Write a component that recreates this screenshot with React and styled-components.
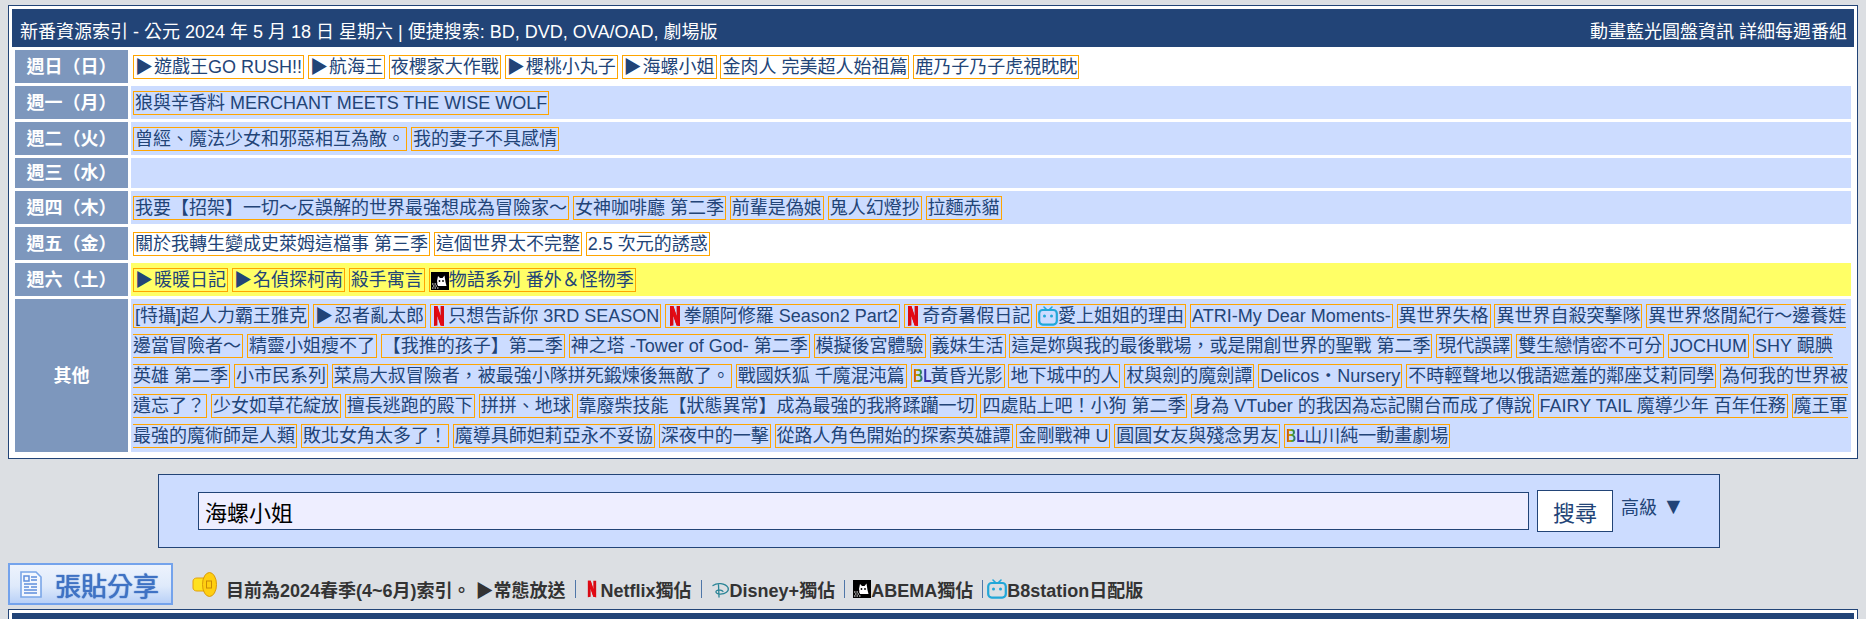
import React from "react";
import styled, { createGlobalStyle } from "styled-components";

const navy = "#224477";
const Global = createGlobalStyle`
  html, body { margin: 0; padding: 0; background: #dcdfe3; }
  body { font-family: "Liberation Sans", "Noto Sans CJK TC", sans-serif; color: ${navy}; }
`;
const Page = styled.div`
  height: 619px; overflow: hidden; padding: 5px 8px 0; box-sizing: border-box;
`;
const Panel = styled.section`
  border: 1px solid ${navy}; background: #fff; padding: 3px 3px 0; margin-top: ${p => p.$top ?? 0}px;
`;
const Panel1 = styled(Panel)`height: 454px; box-sizing: border-box;`;
const Header = styled.header`
  height: 38px; box-sizing: border-box; padding: 9px 7px 0 8px; background: ${navy}; color: #fff;
  display: flex; justify-content: space-between; font-size: 18px; line-height: 28px;
`;
const Rows = styled.div`
  display: flex; flex-direction: column; gap: 3px; padding: 3px 3px 0;
`;
const Row = styled.div`display: flex; gap: 3px;`;
const Label = styled.div`
  flex: 0 0 113px; background: #7d97bd; color: #fff; font-weight: 700; font-size: 18px;
  line-height: 30px; display: flex; align-items: center; justify-content: center;
`;
const Cell = styled.div`
  flex: 1; min-width: 0; background: ${p => p.$bg}; padding: 2px 2px 1px; font-size: 14px; line-height: 0;
  &:empty { padding: 0; }
`;
const Item = styled.a`
  font-size: 18px; color: ${navy}; border: 1px solid #ffa500; padding: 1px; text-decoration: none; line-height: 30px;
`;
const Play = styled.span`margin-right: 1px;`;
const IconWrap = styled.svg`
  width: ${p => p.$w}px; height: ${p => p.$h}px; vertical-align: ${p => p.$va ?? -3}px; margin: ${p => p.$m ?? "0"}; flex: none;
`;
const BLMark = styled.span`
  display: inline-block; width: 25px; margin-right: -7px; font-weight: 700; font-size: 19px; line-height: 1; white-space: nowrap;
  transform: scaleX(.74); transform-origin: left center;
  background: linear-gradient(90deg, #c8301f 0%, #d09a00 20%, #2f9838 38%, #2f48b8 54%, #3f2aa0 75%);
  -webkit-background-clip: text; background-clip: text; color: transparent;
`;
const NIcon = ({ w = 12, h = 20, va = -4, m = "0 3px 0 1.5px" }) => (
  <IconWrap $w={w} $h={h} $va={va} $m={m} viewBox="0 0 12 20">
    <path d="M1 0h3.4l3.2 10V0H11v20l-3.4-.6L4.4 10v9.4L1 20z" fill="#d80a14" />
    <path d="M1 0h3.4L11 20l-3.4-.6z" fill="#e50914" />
  </IconWrap>
);
const B8Icon = ({ w = 20, h = 20, va = -4 }) => (
  <IconWrap $w={w} $h={h} $va={va} viewBox="0 0 20 20">
    <path d="M6 1l3 3M14 1l-3 3" stroke="#22a7d8" strokeWidth="1.6" strokeLinecap="round" />
    <rect x="1.2" y="4" width="17.6" height="14.6" rx="3.5" fill="none" stroke="#22a7d8" strokeWidth="2.2" />
    <circle cx="6.5" cy="10" r="1.5" fill="#22a7d8" /><circle cx="13.5" cy="10" r="1.5" fill="#22a7d8" />
  </IconWrap>
);
const AbemaIcon = ({ va = -4 }) => (
  <IconWrap $w={18} $h={18} $va={va} viewBox="0 0 18 18">
    <rect width="18" height="18" fill="#000" />
    <path d="M6 9l1-5 2 2h2.5l2-2.5 1 6.5 1 4H7z" fill="#fff" />
    <path d="M1 12h6M2 14h5M1 16h7" stroke="#fff" strokeWidth="1.2" strokeDasharray="1.5 1" />
    <circle cx="8.5" cy="9" r=".9" fill="#000" /><circle cx="12" cy="9" r=".9" fill="#000" />
  </IconWrap>
);
const DisneyIcon = () => (
  <IconWrap $w={18} $h={18} $va={-4} $m="0 0 0 2px" viewBox="0 0 18 18">
    <path d="M1 5.5C5 2.5 13 3 16 7.5c1.5 3.5-2.5 7-9 6.5C4 13.5 3 11.5 5 10.5c2-1 5-.5 6 1M6.5 5l.5 12" fill="none" stroke="#2a8496" strokeWidth="1.3" strokeLinecap="round" />
  </IconWrap>
);

const sun = ["▶遊戲王GO RUSH!!","▶航海王","夜櫻家大作戰","▶櫻桃小丸子","▶海螺小姐","金肉人 完美超人始祖篇","鹿乃子乃子虎視眈眈"];
const other = ["[特攝]超人力霸王雅克","▶忍者亂太郎",["n","只想告訴你 3RD SEASON"],["n","拳願阿修羅 Season2 Part2"],["n","奇奇暑假日記"],["b8","愛上姐姐的理由"],"ATRI-My Dear Moments-","異世界失格","異世界自殺突擊隊","異世界悠閒紀行～邊養娃邊當冒險者～","精靈小姐瘦不了","【我推的孩子】第二季","神之塔 -Tower of God- 第二季","模擬後宮體驗","義妹生活","這是妳與我的最後戰場，或是開創世界的聖戰 第二季","現代誤譯","雙生戀情密不可分","JOCHUM","SHY 靦腆英雄 第二季","小市民系列","菜鳥大叔冒險者，被最強小隊拼死鍛煉後無敵了。","戰國妖狐 千魔混沌篇",["bl","黃昏光影"],"地下城中的人","杖與劍的魔劍譚","Delicos・Nursery","不時輕聲地以俄語遮羞的鄰座艾莉同學","為何我的世界被遺忘了？","少女如草花綻放","擅長逃跑的殿下","拼拼、地球","靠廢柴技能【狀態異常】成為最強的我將蹂躪一切","四處貼上吧！小狗 第二季","身為 VTuber 的我因為忘記關台而成了傳說","FAIRY TAIL 魔導少年 百年任務","魔王軍最強的魔術師是人類","敗北女角太多了！","魔導具師妲莉亞永不妥協","深夜中的一擊","從路人角色開始的探索英雄譚","金剛戰神 U","圓圓女友與殘念男友",["bl","山川純一動畫劇場"]];
const rows = [
  ["週日（日）","#fff",sun],
  ["週一（月）","#ccdcff",["狼與辛香料 MERCHANT MEETS THE WISE WOLF"]],
  ["週二（火）","#ccdcff",["曾經、魔法少女和邪惡相互為敵。","我的妻子不具感情"]],
  ["週三（水）","#ccdcff",[]],
  ["週四（木）","#ccdcff",["我要【招架】一切～反誤解的世界最強想成為冒險家～","女神咖啡廳 第二季","前輩是偽娘","鬼人幻燈抄","拉麵赤貓"]],
  ["週五（金）","#fff",["關於我轉生變成史萊姆這檔事 第三季","這個世界太不完整","2.5 次元的誘惑"]],
  ["週六（土）","#ffff66",["▶暖暖日記","▶名偵探柯南","殺手寓言",["abema","物語系列 番外＆怪物季"]]],
  ["其他","#ccdcff",other],
];
const mark = k => k === "n" ? <NIcon /> : k === "b8" ? <B8Icon /> : k === "abema" ? <AbemaIcon /> : k === "bl" ? <BLMark>BL</BLMark> : null;
const content = it => {
  if (Array.isArray(it)) return <>{mark(it[0])}{it[1]}</>;
  if (it.startsWith("▶")) return <><Play>▶</Play>{it.slice(1)}</>;
  return it;
};

const SearchBox = styled.form`
  width: 1562px; height: 74px; box-sizing: border-box; margin: 15px 0 0 150px; background: #ccdcff; border: 1px solid ${navy};
  display: flex; align-items: flex-start; padding: 15px 0 0 39px;
`;
const SearchInput = styled.input`
  width: 1331px; height: 38px; box-sizing: border-box; margin-top: 2px; border: 1px solid ${navy}; background: #eeeeff;
  font: 22px "Liberation Sans", "Noto Sans CJK TC", sans-serif; padding: 0 6px; color: #000; outline: none;
`;
const SearchButton = styled.button`
  width: 76px; height: 42px; box-sizing: border-box; margin-left: 8px; background: #fff; border: 1px solid ${navy};
  font: 22px "Liberation Sans", "Noto Sans CJK TC", sans-serif; color: ${navy}; padding: 0;
`;
const Advanced = styled.a`margin-left: 8px; font-size: 18px; line-height: 36px; color: ${navy}; white-space: nowrap;`;
const Caret = styled.span`font-size: 23px; line-height: 20px;`;
const Footer = styled.div`
  display: flex; align-items: flex-end; height: 42px; margin-top: 15px; font-weight: 700; font-size: 18px; color: #333;
`;
const ShareButton = styled.a`
  width: 165px; height: 42px; box-sizing: border-box; border: 2px solid #74a3ec; flex: none;
  background: linear-gradient(#edf3fd, #dfeafb 55%, #b9d1f7); display: flex; align-items: center; gap: 13px; padding-left: 10px;
  color: #3f72c4; font-size: 26px; font-weight: 400; text-shadow: 0 0 1px #3f72c4, 0 0 1px #3f72c4;
`;
const Notice = styled.div`
  display: flex; align-items: center; height: 28px; margin: 0 0 2px 19px; white-space: nowrap;
`;
const Sep = styled.i`
  width: 1px; height: 18px; background: #4f76a8; margin: 0 ${p => p.$r ?? 8}px 0 9px; flex: none;
`;
const Speaker = () => (
  <IconWrap $w={25} $h={25} $va={0} $m="-9px 9px 0 0" viewBox="0 0 25 25">
    <path d="M1 9c0-2 2-3 4-3h8v13H5c-2 0-4-1-4-3z" fill="#ffe11f" stroke="#e3a008" />
    <ellipse cx="17.5" cy="12.5" rx="7" ry="12" fill="#ffcf10" stroke="#d99a08" />
    <rect x="14.5" y="9" width="5" height="7" fill="none" stroke="#c98a06" />
  </IconWrap>
);
const DocIcon = () => (
  <IconWrap $w={22} $h={27} $va={0} viewBox="0 0 22 27">
    <path d="M1 1h15l5 5v20H1z" fill="#f3f7fe" stroke="#7aa6e8" strokeWidth="1.6" />
    <path d="M4 5h5v5H4zM11 6h6M11 9h6M4 13h13M4 16h5M11 16h6M4 19h13M4 22h13" stroke="#5f8fdc" strokeWidth="1.5" fill="none" />
  </IconWrap>
);

export default function App() {
  return (
    <Page>
      <Global />
      <Panel1>
        <Header>
          <span>新番資源索引 - 公元 2024 年 5 月 18 日 星期六 | 便捷搜索: BD, DVD, OVA/OAD, 劇場版</span>
          <span>動畫藍光圓盤資訊 詳細每週番組</span>
        </Header>
        <Rows>
          {rows.map(([label, bg, items]) => (
            <Row key={label}>
              <Label>{label}</Label>
              <Cell $bg={bg}>
                {items.map((it, i) => (
                  <React.Fragment key={i}>
                    <Item>{content(it)}</Item>{i < items.length - 1 ? " " : null}
                  </React.Fragment>
                ))}
              </Cell>
            </Row>
          ))}
        </Rows>
      </Panel1>
      <SearchBox onSubmit={e => e.preventDefault()}>
        <SearchInput defaultValue="海螺小姐" />
        <SearchButton type="button">搜尋</SearchButton>
        <Advanced>高級 <Caret>▼</Caret></Advanced>
      </SearchBox>
      <Footer>
        <ShareButton><DocIcon />張貼分享</ShareButton>
        <Notice>
          <Speaker />目前為2024春季(4~6月)索引。 ▶常態放送<Sep /><NIcon w={10} h={18} va={0} m="0 4px 0 3px" />Netflix獨佔<Sep /><DisneyIcon />Disney+獨佔<Sep /><AbemaIcon va={0} />ABEMA獨佔<Sep $r={4} /><B8Icon va={0} />B8station日配版
        </Notice>
      </Footer>
      <Panel $top={4}>
        <Header />
      </Panel>
    </Page>
  );
}
